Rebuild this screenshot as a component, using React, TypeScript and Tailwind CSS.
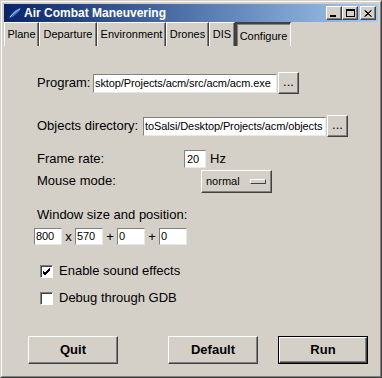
import React from 'react';

const tabs = [
  { label: 'Plane', w: 'w-[35px]' },
  { label: 'Departure', w: 'w-[58px]' },
  { label: 'Environment', w: 'w-[69px]' },
  { label: 'Drones', w: 'w-[43px]' },
  { label: 'DIS', w: 'w-[26px]' },
];

const raised =
  'border border-t-white border-l-white border-r-[#404040] border-b-[#404040] shadow-[inset_-1px_-1px_0_0_#808080] bg-[#d4d0c8]';
const sunken =
  'border border-t-[#808080] border-l-[#808080] border-r-[#e8e8e8] border-b-[#e8e8e8] bg-white';

const Field = ({ text, className }: { text: string; className: string }) => (
  <div
    className={`${sunken} ${className} flex items-center overflow-hidden whitespace-nowrap pl-[1px] text-[11px] tracking-[-0.1px] text-black`}
  >
    {text}
  </div>
);

const DotsButton = () => (
  <div
    className={`${raised} w-[21px] h-[22px] flex items-center justify-center text-[13px] pb-[3px]`}
  >
    ...
  </div>
);

const Check = ({ checked, label }: { checked: boolean; label: string }) => (
  <div className="flex items-center h-[18px] pl-[36px]">
    <div className="w-[13px] h-[13px] bg-white border border-t-[#808080] border-l-[#808080] border-r-white border-b-white shadow-[inset_1px_1px_0_0_#404040] flex items-center justify-center">
      {checked && (
        <svg width="9" height="9" viewBox="0 0 9 9">
          <path d="M1 4 L3 6 L8 1 M1 5 L3 7 L8 2 M1 6 L3 8 L8 3" stroke="#000" strokeWidth="1" fill="none" />
        </svg>
      )}
    </div>
    <span className="ml-[6px] text-[13px]">{label}</span>
  </div>
);

const CtrlButton = ({ children }: { children: React.ReactNode }) => (
  <div className={`${raised} w-[16px] h-[14px] flex items-center justify-center`}>{children}</div>
);

const App = () => {
  return (
    <div
      className="w-[382px] h-[378px] bg-[#d4d0c8] border border-t-[#d4d0c8] border-l-[#d4d0c8] border-r-[#404040] border-b-[#404040] text-black"
      style={{ fontFamily: '"Liberation Sans", Arial, sans-serif' }}
    >
      <div className="h-full border border-t-white border-l-white border-r-[#808080] border-b-[#808080] p-[2px] flex flex-col">
        {/* title bar */}
        <div className="h-[18px] flex items-center bg-gradient-to-r from-[#0a246a] to-[#a6caf0] pl-[4px] pr-[2px]">
          <svg width="14" height="12" viewBox="0 0 14 12">
            <path d="M1 11 C3 7 7 2 13 1 C11 5 7 9 2 11 Z" fill="#3d74c8" />
            <path d="M2 10 C5 7 8 4 12 2" stroke="#a9c8f0" strokeWidth="1" fill="none" />
          </svg>
          <span className="ml-[2px] text-white font-bold text-[12px] leading-none">Air Combat Maneuvering</span>
          <div className="ml-auto flex items-center">
            <CtrlButton>
              <div className="w-[6px] h-[2px] bg-black mt-[6px] mr-[2px]" />
            </CtrlButton>
            <CtrlButton>
              <div className="w-[9px] h-[8px] border border-black border-t-2" />
            </CtrlButton>
            <div className="ml-[2px]">
              <CtrlButton>
                <svg width="8" height="7" viewBox="0 0 8 7">
                  <path d="M0.5 0.5 L7 6.5 M1.5 0.5 L7.5 6.5 M7 0.5 L0.5 6.5 M7.5 0.5 L1.5 6.5" stroke="#000" strokeWidth="1" />
                </svg>
              </CtrlButton>
            </div>
          </div>
        </div>

        {/* tabs */}
        <div className="flex h-[24px]">
          {tabs.map((tab) => (
            <div
              key={tab.label}
              className={`${tab.w} h-[24px] border-t border-l border-t-white border-l-white border-r border-r-[#404040] shadow-[inset_-1px_0_0_0_#808080] flex items-center justify-center text-[11px]`}
            >
              {tab.label}
            </div>
          ))}
          <div className="w-[56px] h-[24px] border-t-2 border-l-2 border-t-[#404040] border-l-[#404040] border-r border-r-white shadow-[inset_1px_1px_0_0_#808080] flex items-center justify-center text-[11px] pt-[2px]">
            Configure
          </div>
        </div>

        {/* panel */}
        <div className="flex flex-col">
          <div className="mt-[26px] h-[22px] flex items-center pl-[33px]">
            <span className="w-[56px] text-[13px]">Program:</span>
            <Field text="sktop/Projects/acm/src/acm/acm.exe" className="w-[184px] h-[19px]" />
            <div className="ml-[1px]">
              <DotsButton />
            </div>
          </div>

          <div className="mt-[21px] h-[22px] flex items-center pl-[33px]">
            <span className="w-[106px] text-[13px]">Objects directory:</span>
            <Field text="toSalsi/Desktop/Projects/acm/objects" className="w-[183px] h-[19px]" />
            <div className="ml-[1px]">
              <DotsButton />
            </div>
          </div>

          <div className="mt-[11px] h-[22px] flex items-center pl-[33px]">
            <span className="w-[147px] text-[13px]">Frame rate:</span>
            <Field text="20" className="w-[22px] h-[18px] pl-[2px]" />
            <span className="ml-[4px] text-[13px]">Hz</span>
          </div>

          <div className="h-[22px] flex items-center pl-[33px]">
            <span className="w-[164px] text-[13px]">Mouse mode:</span>
            <div className={`${raised} w-[71px] h-[23px] flex items-center pl-[4px] text-[11px]`}>
              <span>normal</span>
              <div className="ml-auto mr-[5px] w-[16px] h-[5px] border border-t-white border-l-white border-r-[#404040] border-b-[#404040] bg-[#d4d0c8]" />
            </div>
          </div>

          <div className="mt-[15px] h-[16px] leading-[16px] pl-[33px] text-[13px]">
            Window size and position:
          </div>

          <div className="mt-[5px] h-[17px] flex items-center pl-[30px] text-[13px]">
            <Field text="800" className="w-[28px] h-[17px]" />
            <span className="w-[13px] text-center">x</span>
            <Field text="570" className="w-[28px] h-[17px]" />
            <span className="w-[14px] text-center">+</span>
            <Field text="0" className="w-[28px] h-[17px]" />
            <span className="w-[14px] text-center">+</span>
            <Field text="0" className="w-[28px] h-[17px]" />
          </div>

          <div className="mt-[17px]">
            <Check checked label="Enable sound effects" />
          </div>
          <div className="mt-[9px]">
            <Check checked={false} label="Debug through GDB" />
          </div>

          <div className="mt-[29px] flex pl-[24px]">
            <div className={`${raised} w-[90px] h-[28px] flex items-center justify-center font-bold text-[13px]`}>
              Quit
            </div>
            <div className={`${raised} ml-[50px] w-[90px] h-[28px] flex items-center justify-center font-bold text-[13px]`}>
              Default
            </div>
            <div className="ml-[20px] w-[90px] h-[28px] border border-black">
              <div className={`${raised} w-full h-full flex items-center justify-center font-bold text-[13px]`}>
                Run
              </div>
            </div>
          </div>
        </div>
      </div>
    </div>
  );
};

export default App;
